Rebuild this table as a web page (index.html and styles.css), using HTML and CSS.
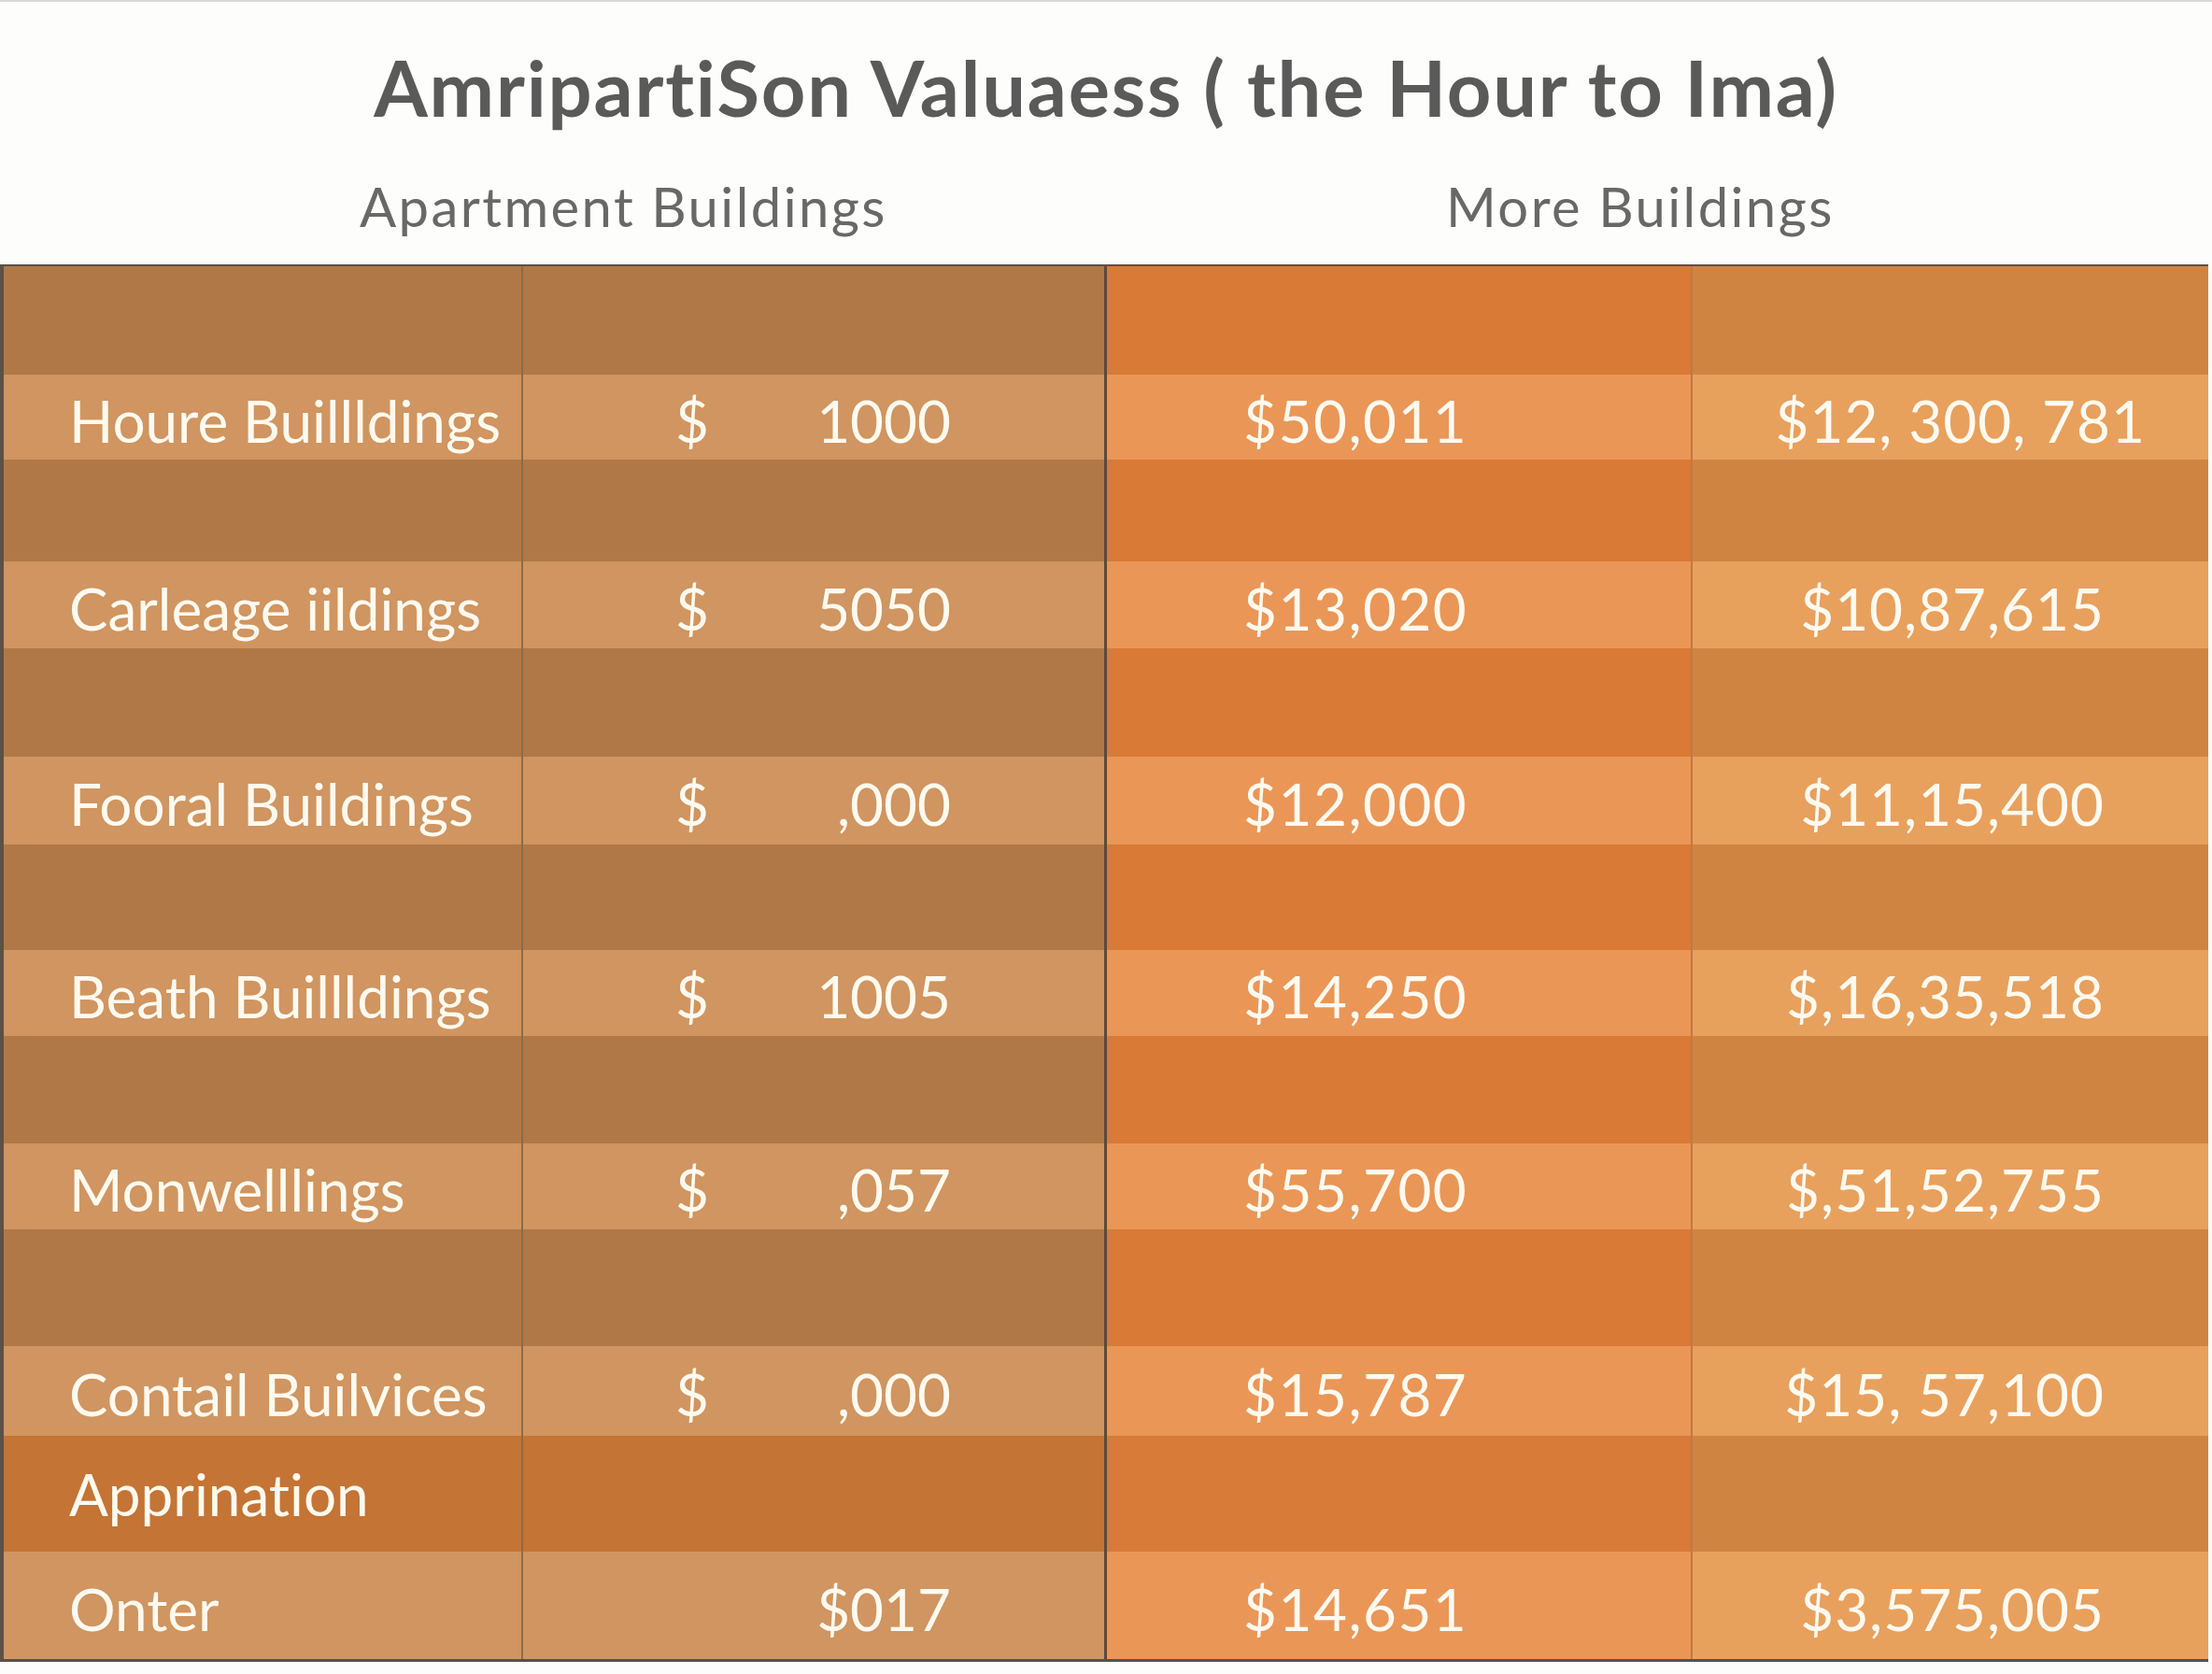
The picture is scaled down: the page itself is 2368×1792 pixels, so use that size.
FILE: index.html
```html
<!DOCTYPE html>
<html lang="en">
<head>
<meta charset="utf-8">
<title>AmripartiSon Valuaess</title>
<link rel="stylesheet" href="styles.css">
</head>
<body>
<header class="header">
  <h1 class="title">AmripartiSon Valuaess ( the Hour to Ima)</h1>
  <div class="groups">
    <div class="group">Apartment Buildings</div>
    <div class="group">More Buildings</div>
  </div>
</header>
<div class="table">
  <div class="row dark"><div class="c c1"></div><div class="c c2"></div><div class="c c3"></div><div class="c c4"></div></div>
  <div class="row light"><div class="c c1">Houre Buillldings</div><div class="c c2"><span>$</span><span>1000</span></div><div class="c c3">$50,011</div><div class="c c4 wide">$12, 300, 781</div></div>
  <div class="row dark"><div class="c c1"></div><div class="c c2"></div><div class="c c3"></div><div class="c c4"></div></div>
  <div class="row light"><div class="c c1">Carleage iildings</div><div class="c c2"><span>$</span><span>5050</span></div><div class="c c3">$13,020</div><div class="c c4">$10,87,615</div></div>
  <div class="row dark"><div class="c c1"></div><div class="c c2"></div><div class="c c3"></div><div class="c c4"></div></div>
  <div class="row light"><div class="c c1">Fooral Buildings</div><div class="c c2"><span>$</span><span>,000</span></div><div class="c c3">$12,000</div><div class="c c4">$11,15,400</div></div>
  <div class="row dark"><div class="c c1"></div><div class="c c2"></div><div class="c c3"></div><div class="c c4"></div></div>
  <div class="row light"><div class="c c1">Beath Buillldings</div><div class="c c2"><span>$</span><span>1005</span></div><div class="c c3">$14,250</div><div class="c c4">$,16,35,518</div></div>
  <div class="row dark"><div class="c c1"></div><div class="c c2"></div><div class="c c3"></div><div class="c c4"></div></div>
  <div class="row light"><div class="c c1">Monwelllings</div><div class="c c2"><span>$</span><span>,057</span></div><div class="c c3">$55,700</div><div class="c c4">$,51,52,755</div></div>
  <div class="row dark"><div class="c c1"></div><div class="c c2"></div><div class="c c3"></div><div class="c c4"></div></div>
  <div class="row light"><div class="c c1">Contail Builvices</div><div class="c c2"><span>$</span><span>,000</span></div><div class="c c3">$15,787</div><div class="c c4">$15, 57,100</div></div>
  <div class="row accent"><div class="c c1 mid">Apprination</div><div class="c c2"></div><div class="c c3"></div><div class="c c4"></div></div>
  <div class="row light"><div class="c c1">Onter</div><div class="c c2 end"><span>$017</span></div><div class="c c3">$14,651</div><div class="c c4">$3,575,005</div></div>
</div>
</body>
</html>
```
FILE: styles.css
```css
* { box-sizing: border-box; }

html, body {
  margin: 0;
  padding: 0;
  background: #fdfdfb;
}

body {
  width: 2368px;
  font-family: "Lato", "Open Sans", "Liberation Sans", sans-serif;
  font-variant-ligatures: none;
}

.header {
  border-top: 2px solid #d9d9d9;
  padding-top: 41px;
  padding-bottom: 27px;
}

.title {
  margin: 0;
  font-size: 83px;
  line-height: 100px;
  font-weight: 700;
  letter-spacing: 1.8px;
  color: #5a5a5a;
  text-align: center;
}

.groups {
  margin-top: 43px;
  display: grid;
  grid-template-columns: 1163px auto;
  padding-left: 385px;
}

.group {
  font-size: 58px;
  line-height: 70px;
  letter-spacing: 2.4px;
  color: #686868;
  white-space: nowrap;
}

.table {
  width: 2364px;
  border-left: 4px solid #5c5047;
  border-top: 2px solid #5c5047;
  border-bottom: 3px solid #5c5047;
  display: grid;
  grid-template-columns: 556px 625px 627px 552px;
  grid-template-rows: 116px 91px 109px 93px 116px 94px 113px 92px 115px 92px 125px 96px 124px 115px;
}

.row { display: contents; }

.c {
  display: flex;
  align-items: center;
  padding-top: 6px;
  font-size: 62px;
  color: #fffaf0;
  white-space: nowrap;
}

.c1 { padding-left: 70px; border-right: 2px solid #8d6a4a; }
.c2 {
  justify-content: space-between;
  padding-left: 163px;
  padding-right: 164px;
  border-right: 3px solid #5b4a3c;
}
.c2.end { justify-content: flex-end; }
.c3 { padding-left: 146px; border-right: 2px solid #c07a42; letter-spacing: 1.5px; }
.c4 { justify-content: flex-end; padding-right: 111px; letter-spacing: 1px; }
.c4.wide { padding-right: 67px; }
.c1.mid { padding-top: 0; }

.dark .c1, .dark .c2 { background: #b07847; }
.dark .c3 { background: #d97a37; }
.dark .c4 { background: #d08442; }

.light .c1, .light .c2 { background: #d09560; }
.light .c3 { background: #ea9657; }
.light .c4 { background: #e8a05d; }

.accent .c1, .accent .c2 { background: #c47434; }
.accent .c3 { background: #d87a38; }
.accent .c4 { background: #d08442; }
```
